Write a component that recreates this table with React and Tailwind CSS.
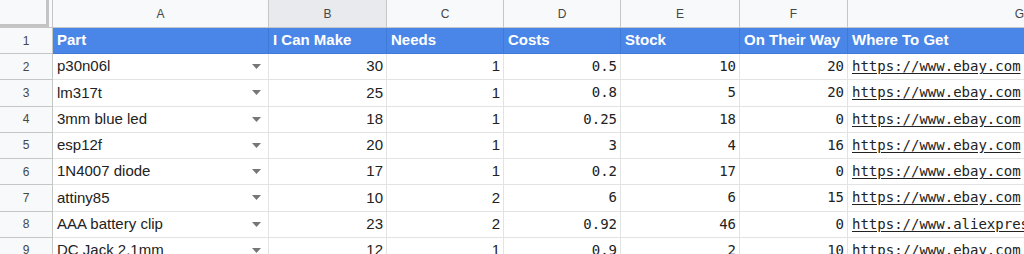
import React from 'react';

const cols = ['A', 'B', 'C', 'D', 'E', 'F', 'G'];

const rows = [
  ['p30n06l', 30, 1, '0.5', 10, 20, 'https://www.ebay.com'],
  ['lm317t', 25, 1, '0.8', 5, 20, 'https://www.ebay.com'],
  ['3mm blue led', 18, 1, '0.25', 18, 0, 'https://www.ebay.com'],
  ['esp12f', 20, 1, '3', 4, 16, 'https://www.ebay.com'],
  ['1N4007 diode', 17, 1, '0.2', 17, 0, 'https://www.ebay.com'],
  ['attiny85', 10, 2, '6', 6, 15, 'https://www.ebay.com'],
  ['AAA battery clip', 23, 2, '0.92', 46, 0, 'https://www.aliexpress.com'],
  ['DC Jack 2.1mm', 12, 1, '0.9', 2, 10, 'https://www.ebay.com'],
];

const headers = ['Part', 'I Can Make', 'Needs', 'Costs', 'Stock', 'On Their Way', 'Where To Get'];

const grid = 'grid grid-cols-[53px_216px_118px_117px_117px_119px_108px_344px]';
const sans = 'font-["Liberation_Sans",Arial,sans-serif]';
const mono = 'font-["DejaVu_Sans_Mono","Liberation_Mono",monospace]';

function Arrow() {
  return (
    <svg width="9" height="5" viewBox="0 0 9 5" className="shrink-0">
      <path d="M0 0h9L4.5 5z" fill="#767676" />
    </svg>
  );
}

export default function App() {
  return (
    <div className={`w-[1024px] h-[254px] overflow-hidden bg-white ${sans}`}>
      {/* column letters */}
      <div className={`${grid} h-[28px] bg-[#f8f9fa] border-b border-[#c4c7c5]`}>
        <div className="relative border-r border-[#c4c7c5]">
          <div className="absolute left-0 top-0 w-[49px] h-[27px] border-r-[3px] border-b-[3px] border-[#c4c4c4]" />
        </div>
        {cols.map((c) => (
          <div
            key={c}
            className={`flex items-center justify-center text-[12px] text-[#444746] border-r border-[#c4c7c5] ${c === 'B' ? 'bg-[#e8eaed]' : ''}`}
          >
            {c}
          </div>
        ))}
      </div>

      {/* header row */}
      <div className={`${grid} h-[26px]`}>
        <div className="flex items-center justify-center text-[12px] text-[#444746] bg-[#f8f9fa] border-r border-b border-[#c4c7c5]">
          1
        </div>
        {headers.map((h) => (
          <div
            key={h}
            className="flex items-center px-1 bg-[#4a86e8] text-white font-bold text-[15px] whitespace-nowrap overflow-hidden border-r border-b border-[#3f7ad6]"
          >
            {h}
          </div>
        ))}
      </div>

      {rows.map((r, i) => (
        <div key={i} className={`${grid} h-[26.25px]`}>
          <div className="flex items-center justify-center text-[12px] text-[#444746] bg-[#f8f9fa] border-r border-b border-[#c4c7c5]">
            {i + 2}
          </div>
          <div className="flex items-center justify-between pl-1 pr-[7px] text-[15px] text-[#222] border-r border-b border-[#e2e3e3] whitespace-nowrap">
            <span>{r[0]}</span>
            <Arrow />
          </div>
          <div className="flex items-center justify-end px-[3px] text-[15px] text-[#222] border-r border-b border-[#e2e3e3]">
            {r[1]}
          </div>
          <div className="flex items-center justify-end px-[3px] text-[15px] text-[#222] border-r border-b border-[#e2e3e3]">
            {r[2]}
          </div>
          <div className={`flex items-center justify-end px-[3px] text-[14px] text-[#222] border-r border-b border-[#e2e3e3] ${mono}`}>
            {r[3]}
          </div>
          <div className={`flex items-center justify-end px-[3px] text-[14px] text-[#222] border-r border-b border-[#e2e3e3] ${mono}`}>
            {r[4]}
          </div>
          <div className={`flex items-center justify-end px-[3px] text-[14px] text-[#222] border-r border-b border-[#e2e3e3] ${mono}`}>
            {r[5]}
          </div>
          <div className={`flex items-center pl-1 text-[14px] text-[#222] underline underline-offset-2 whitespace-nowrap overflow-hidden border-r border-b border-[#e2e3e3] ${mono}`}>
            {r[6]}
          </div>
        </div>
      ))}
    </div>
  );
}
